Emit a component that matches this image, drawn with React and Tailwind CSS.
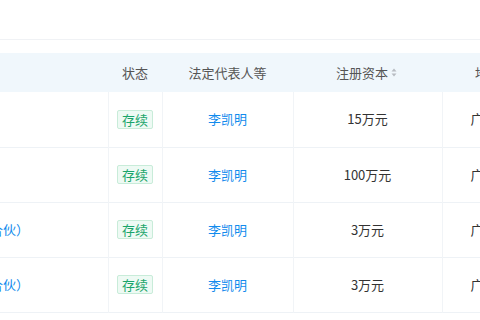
export default function App() {
  const rows = [
    { name: "广州凯明科技有限公司", cap: "15万元" },
    { name: "广州凯明贸易有限公司", cap: "100万元" },
    { name: "广州凯明投资管理合伙企业（有限合伙）", cap: "3万元" },
    { name: "广州凯明咨询服务合伙企业（有限合伙）", cap: "3万元" },
  ];
  const font = { fontFamily: '"Noto Sans CJK SC", "Noto Sans", sans-serif' };
  return (
    <div className="w-[480px] h-[320px] overflow-hidden bg-white" style={font}>
      <div className="h-[40px] border-b border-[#f0f2f5]"></div>
      <div className="mt-[13px] w-[480px] overflow-hidden">
        <table className="table-fixed border-collapse ml-[-260px] w-[890px] text-[13px] leading-[18px]">
          <colgroup>
            <col className="w-[368px]" />
            <col className="w-[54px]" />
            <col className="w-[131px]" />
            <col className="w-[149px]" />
            <col className="w-[188px]" />
          </colgroup>
          <thead>
            <tr className="h-[39px] bg-[#f0f7fc] text-[#555]">
              <th className="font-normal text-left pl-[55px] whitespace-nowrap">企业名称</th>
              <th className="font-normal text-center whitespace-nowrap">状态</th>
              <th className="font-normal text-center whitespace-nowrap">法定代表人等</th>
              <th className="font-normal text-center whitespace-nowrap">
                <span className="inline-flex items-center gap-[3px] ml-[-2px]">
                  注册资本
                  <svg width="6" height="9" viewBox="0 0 6 9">
                    <path d="M3 0.5 L5.5 3.5 L0.5 3.5 Z" fill="#b8bcc2" />
                    <path d="M3 8.5 L5.5 5.5 L0.5 5.5 Z" fill="#b8bcc2" />
                  </svg>
                </span>
              </th>
              <th className="font-normal text-left pl-[33px] whitespace-nowrap">地址</th>
            </tr>
          </thead>
          <tbody>
            {rows.map((r, i) => (
              <tr key={i} className="h-[55px] border-b border-[#eef2f6]">
                <td className="pl-[55px] text-left whitespace-nowrap text-[#128bed] border-r border-[#f1f4f7]">{r.name}</td>
                <td className="text-center border-r border-[#f1f4f7]">
                  <span className="inline-block px-[4px] h-[19px] leading-[17px] text-[13px] text-[#1aa56b] bg-[#eefaf4] border border-[#c8ecd9] rounded-[2px]">存续</span>
                </td>
                <td className="text-center text-[#128bed] border-r border-[#f1f4f7] whitespace-nowrap">李凯明</td>
                <td className="text-center text-[#333] border-r border-[#f1f4f7] whitespace-nowrap">{r.cap}</td>
                <td className="text-left pl-[28px] text-[#333] whitespace-nowrap">广东省广州市天河区</td>
              </tr>
            ))}
          </tbody>
        </table>
      </div>
    </div>
  );
}
